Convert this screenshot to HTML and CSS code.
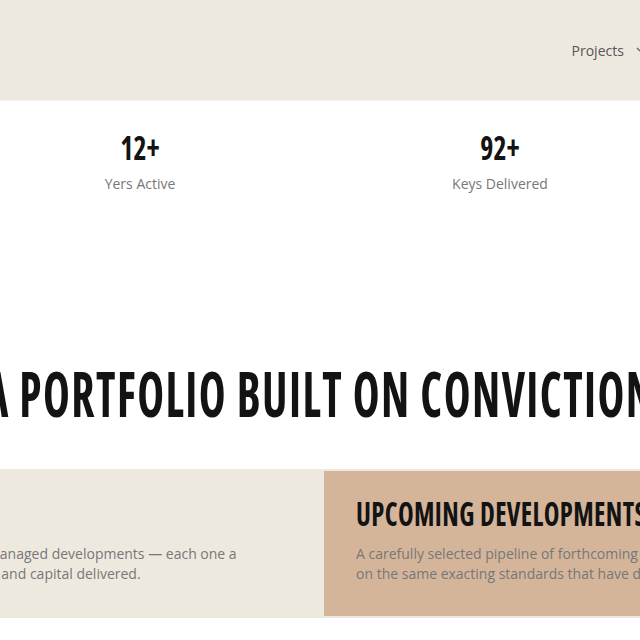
FILE: index.html
```html
<!DOCTYPE html>
<html lang="en">
<head>
    <meta charset="UTF-8" />
    <meta name="viewport" content="width=device-width, initial-scale=1.0"/>
    <title>Portfolio</title>
    <link rel="stylesheet" href="styles.css">
</head>
<body>
<div class="page">

    <header class="site-header">
        <div class="brand">ARCHSTONE</div>
        <nav class="nav-links">
            <a href="#" class="has-menu">Projects
                <svg class="caret" width="10" height="6" viewBox="0 0 10 6"><path d="M1 1l4 4 4-4" fill="none" stroke="#555" stroke-width="1.2"/></svg>
            </a>
            <a href="#">About</a>
            <a href="#">Journal</a>
            <a href="#">Contact</a>
        </nav>
    </header>

    <section class="stats">
        <div class="stat">
            <div class="stat-num"><span>180+</span></div>
            <div class="stat-label">Units Built</div>
        </div>
        <div class="stat">
            <div class="stat-num"><span>12+</span></div>
            <div class="stat-label">Yers Active</div>
        </div>
        <div class="stat">
            <div class="stat-num"><span>92+</span></div>
            <div class="stat-label">Keys Delivered</div>
        </div>
        <div class="stat">
            <div class="stat-num"><span>$240M</span></div>
            <div class="stat-label">Capital Deployed</div>
        </div>
    </section>

    <h2 class="section-title"><span>A Portfolio Built on Conviction</span></h2>

    <section class="cards">
        <div class="card">
            <h3 class="card-title"><span>Completed Projects</span></h3>
            <p class="card-text">Our record of completed carefully conceived and fully managed developments — each one a<br>testament to vision, craftsmanship, prudence, discipline and capital delivered.</p>
        </div>
        <div class="card card-tan">
            <h3 class="card-title"><span>Upcoming Developments</span></h3>
            <p class="card-text">A carefully selected pipeline of forthcoming projects, built<br>on the same exacting standards that have defined every one of our schemes.</p>
        </div>
    </section>

</div>
</body>
</html>
```

FILE: styles.css
```css
* {
    margin: 0;
    padding: 0;
    box-sizing: border-box;
}

body {
    font-family: 'Open Sans', sans-serif;
    background-color: #fff;
    overflow: hidden;
}

/* wide canvas, viewport shows its middle */
.page {
    width: 1440px;
    margin-left: -400px;
}

.site-header {
    display: flex;
    justify-content: space-between;
    align-items: center;
    height: 101px;
    padding: 0 60px;
    background-color: #eee9df;
    border-bottom: 1px solid #f5f2ec;
}

.brand {
    font-weight: 700;
    font-stretch: 75%;
    font-size: 26px;
    color: #111;
}

.nav-links {
    display: flex;
    align-items: center;
    gap: 40px;
    padding-right: 78px;
}

.nav-links a {
    display: flex;
    align-items: center;
    gap: 12px;
    text-decoration: none;
    color: #555;
    font-size: 14px;
}

.stats {
    display: grid;
    grid-template-columns: repeat(4, 1fr);
    padding-top: 29px;
}

.stat {
    text-align: center;
}

/* condensed display type */
.stat-num,
.section-title,
.card-title {
    font-weight: 700;
    font-stretch: 75%;
    color: #131313;
    text-transform: uppercase;
    line-height: 1;
    white-space: nowrap;
}

.stat-num span,
.section-title span,
.card-title span {
    display: inline-block;
}

.stat-num {
    font-size: 34px;
}

.stat-num span {
    transform: scaleX(0.82);
}

.stat-label {
    margin-top: 10px;
    font-size: 14px;
    line-height: 20px;
    color: #777;
}

.section-title {
    margin-top: 167px;
    font-size: 63px;
    letter-spacing: 2px;
    text-align: center;
}

.section-title span {
    transform: scaleX(0.72);
}

.cards {
    display: grid;
    grid-template-columns: 722px 1fr;
    margin-top: 45px;
    padding: 2px;
    background-color: #eee9df;
}

.card {
    padding: 25px 32px 32px;
}

.card-tan {
    background-color: #d4b59a;
}

.card-title {
    font-size: 34px;
    letter-spacing: 0.5px;
}

.card-title span {
    transform: scaleX(0.78);
    transform-origin: left center;
}

.card-text {
    margin-top: 14px;
    font-size: 14px;
    line-height: 20px;
    color: #777;
    white-space: nowrap;
}
```
